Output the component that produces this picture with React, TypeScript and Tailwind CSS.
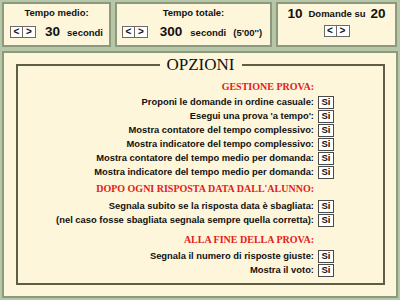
import React from 'react';

const sans = { fontFamily: '"Liberation Sans", Arial, sans-serif' };
const serif = { fontFamily: '"Liberation Serif", "Times New Roman", serif' };

// small < > stepper
const Arrows = () => (
  <div className="flex">
    <span className="w-[13px] h-[12px] border border-[#6a6a6a] bg-white flex items-center justify-center text-[10px] leading-none font-bold">&lt;</span>
    <span className="w-[13px] h-[12px] border border-l-0 border-[#6a6a6a] bg-white flex items-center justify-center text-[10px] leading-none font-bold">&gt;</span>
  </div>
);

const SiBox = () => (
  <span className="w-[16px] h-[13px] border border-[#4a4a4a] bg-white flex items-center justify-center text-[9.5px] leading-none font-bold">Si</span>
);

const Row = ({ label }: { label: string }) => (
  <>
    <div className="text-right text-[9.4px] font-bold leading-[14px] pr-[4px] whitespace-nowrap">{label}</div>
    <div className="flex items-center h-[14px]"><SiBox /></div>
  </>
);

const Header = ({ text, className }: { text: string; className?: string }) => (
  <>
    <div className={`text-right text-[10px] font-bold text-[#e22020] leading-[14px] pr-[4px] whitespace-nowrap ${className ?? ''}`} style={serif}>{text}</div>
    <div className={className}></div>
  </>
);

const App = () => {
  return (
    <div className="w-[400px] h-[300px] bg-[#b7c6a7] p-[2px] text-[#111]" style={sans}>
      {/* top boxes */}
      <div className="flex gap-[4px] h-[45px]">
        <div className="w-[109px] border-2 border-[#8b9a7e] bg-[#fdf6da] flex flex-col items-center pt-[2px]">
          <div className="text-[9.5px] font-bold leading-[14px]">Tempo medio:</div>
          <div className="flex items-center h-[14px] mt-[5px]">
            <Arrows />
            <span className="text-[13.5px] font-bold ml-[9px]">30</span>
            <span className="text-[9.5px] font-bold ml-[7px] mt-[2px]">secondi</span>
          </div>
        </div>
        <div className="w-[157px] border-2 border-[#8b9a7e] bg-[#fdf6da] flex flex-col items-center pt-[2px]">
          <div className="text-[9.5px] font-bold leading-[14px]">Tempo totale:</div>
          <div className="flex items-center h-[14px] mt-[5px] -ml-[3px]">
            <Arrows />
            <span className="text-[13.5px] font-bold ml-[12px]">300</span>
            <span className="text-[9.5px] font-bold ml-[8px] mt-[2px]">secondi</span>
            <span className="text-[9.5px] font-bold ml-[7px] mt-[2px]">(5'00'')</span>
          </div>
        </div>
        <div className="w-[121px] border-2 border-[#8b9a7e] bg-[#fdf6da] flex flex-col items-center pt-[2px]">
          <div className="flex items-center h-[16px]">
            <span className="text-[13.5px] font-bold">10</span>
            <span className="text-[9.5px] font-bold ml-[6px] mt-[1px]">Domande su</span>
            <span className="text-[13.5px] font-bold ml-[5px]">20</span>
          </div>
          <div className="mt-[3px]"><Arrows /></div>
        </div>
      </div>

      {/* options panel */}
      <div className="mt-[4px] h-[247px] border-2 border-[#8b9a7e] bg-[#fdf6da] pl-[12px] pr-[11px] pt-[3px] pb-[11px]">
        <fieldset className="h-full border-2 border-[#5e5e46] px-0 pb-0">
          <legend className="mx-auto px-[7px] text-[17px] leading-[18px] text-[#111]" style={serif}>OPZIONI</legend>
          <div className="grid grid-cols-[1fr_16px] pr-[49px] mt-[6px]">
            <Header text="GESTIONE PROVA:" className="mb-[1px]" />
            <Row label="Proponi le domande in ordine casuale:" />
            <Row label="Esegui una prova 'a tempo':" />
            <Row label="Mostra contatore del tempo complessivo:" />
            <Row label="Mostra indicatore del tempo complessivo:" />
            <Row label="Mostra contatore del tempo medio per domanda:" />
            <Row label="Mostra indicatore del tempo medio per domanda:" />
            <Header text="DOPO OGNI RISPOSTA DATA DALL'ALUNNO:" className="mt-[3px] mb-[3px]" />
            <Row label="Segnala subito se la risposta data è sbagliata:" />
            <Row label="(nel caso fosse sbagliata segnala sempre quella corretta):" />
            <Header text="ALLA FINE DELLA PROVA:" className="mt-[6px] mb-[2px]" />
            <Row label="Segnala il numero di risposte giuste:" />
            <Row label="Mostra il voto:" />
          </div>
        </fieldset>
      </div>
    </div>
  );
};

export default App;
